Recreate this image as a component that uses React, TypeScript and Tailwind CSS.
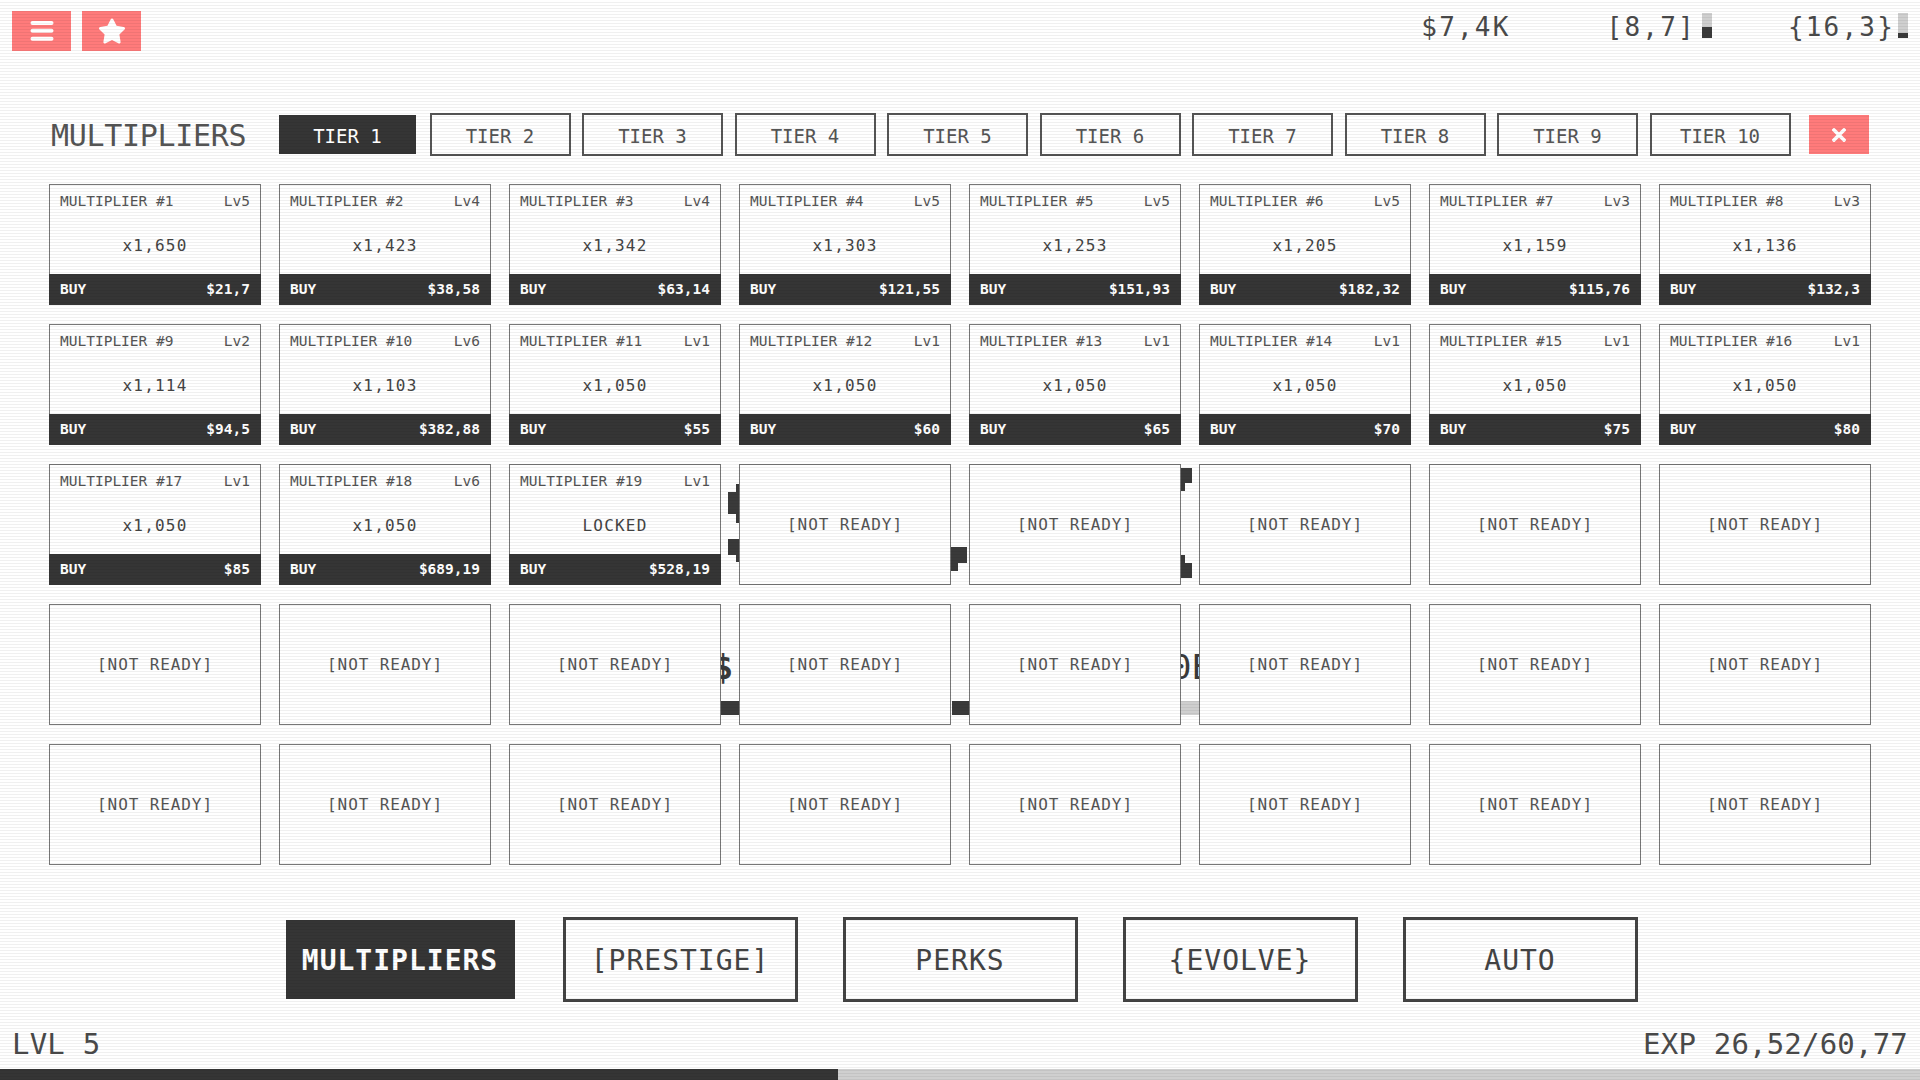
import { FaStar } from 'react-icons/fa';

type Mult = { name: string; lv: string; value: string; price: string };

const multipliers: Mult[] = [
  { name: 'MULTIPLIER #1', lv: 'Lv5', value: 'x1,650', price: '$21,7' },
  { name: 'MULTIPLIER #2', lv: 'Lv4', value: 'x1,423', price: '$38,58' },
  { name: 'MULTIPLIER #3', lv: 'Lv4', value: 'x1,342', price: '$63,14' },
  { name: 'MULTIPLIER #4', lv: 'Lv5', value: 'x1,303', price: '$121,55' },
  { name: 'MULTIPLIER #5', lv: 'Lv5', value: 'x1,253', price: '$151,93' },
  { name: 'MULTIPLIER #6', lv: 'Lv5', value: 'x1,205', price: '$182,32' },
  { name: 'MULTIPLIER #7', lv: 'Lv3', value: 'x1,159', price: '$115,76' },
  { name: 'MULTIPLIER #8', lv: 'Lv3', value: 'x1,136', price: '$132,3' },
  { name: 'MULTIPLIER #9', lv: 'Lv2', value: 'x1,114', price: '$94,5' },
  { name: 'MULTIPLIER #10', lv: 'Lv6', value: 'x1,103', price: '$382,88' },
  { name: 'MULTIPLIER #11', lv: 'Lv1', value: 'x1,050', price: '$55' },
  { name: 'MULTIPLIER #12', lv: 'Lv1', value: 'x1,050', price: '$60' },
  { name: 'MULTIPLIER #13', lv: 'Lv1', value: 'x1,050', price: '$65' },
  { name: 'MULTIPLIER #14', lv: 'Lv1', value: 'x1,050', price: '$70' },
  { name: 'MULTIPLIER #15', lv: 'Lv1', value: 'x1,050', price: '$75' },
  { name: 'MULTIPLIER #16', lv: 'Lv1', value: 'x1,050', price: '$80' },
  { name: 'MULTIPLIER #17', lv: 'Lv1', value: 'x1,050', price: '$85' },
  { name: 'MULTIPLIER #18', lv: 'Lv6', value: 'x1,050', price: '$689,19' },
  { name: 'MULTIPLIER #19', lv: 'Lv1', value: 'LOCKED', price: '$528,19' },
];

const tiers = ['TIER 1', 'TIER 2', 'TIER 3', 'TIER 4', 'TIER 5', 'TIER 6', 'TIER 7', 'TIER 8', 'TIER 9', 'TIER 10'];
const navs = ['MULTIPLIERS', '[PRESTIGE]', 'PERKS', '{EVOLVE}', 'AUTO'];

function MultCard({ m }: { m: Mult }) {
  return (
    <div className="relative z-10 flex h-[121px] flex-col border border-[#777] bg-white">
      <div className="flex justify-between pl-[10px] pr-[10px] pt-[9px] text-[14.5px] leading-none text-[#555]">
        <span>{m.name}</span>
        <span>{m.lv}</span>
      </div>
      <div className="mt-[29px] text-center text-[16px] leading-none tracking-[1.2px] text-[#444]">{m.value}</div>
      <div className="-mx-px -mb-px mt-auto flex h-[31px] items-center justify-between bg-[#353535] px-[11px] text-[14.5px] font-bold leading-none text-white">
        <span>BUY</span>
        <span>{m.price}</span>
      </div>
    </div>
  );
}

function EmptyCard() {
  return (
    <div className="relative z-10 flex h-[121px] items-center justify-center border border-[#777] bg-white text-[16px] leading-none tracking-[0.9px] text-[#555]">
      [NOT READY]
    </div>
  );
}

function Gauge({ fill }: { fill: number }) {
  return (
    <div className="flex h-[25px] w-[10px] flex-col justify-end bg-[#cfcfcf]">
      <div className="w-full bg-[#3a3a3a]" style={{ height: `${fill}%` }} />
    </div>
  );
}

export default function App() {
  const empties = Array.from({ length: 40 - multipliers.length });

  return (
    <div className="relative flex h-[1080px] w-[1920px] flex-col overflow-hidden bg-white font-['DejaVu_Sans_Mono',monospace] text-[#4a4a4a]">
      {/* top bar */}
      <div className="flex items-start justify-between px-[12px] pt-[11px]">
        <div className="flex gap-[11px]">
          <button className="flex h-[40px] w-[59px] items-center justify-center bg-[#ff7b7b]">
            <svg width="24" height="20" viewBox="0 0 24 20">
              <rect x="0.5" y="0" width="23" height="4" rx="2" fill="white" />
              <rect x="0.5" y="7.8" width="23" height="4" rx="2" fill="white" />
              <rect x="0.5" y="15.8" width="23" height="4" rx="2" fill="white" />
            </svg>
          </button>
          <button className="flex h-[40px] w-[59px] items-center justify-center bg-[#ff7b7b] text-white">
            <FaStar size={28} />
          </button>
        </div>
        <div className="mt-[2px] flex items-start text-[26px] leading-none tracking-[2.2px] text-[#4a4a4a]">
          <span className="mt-[1px]">$7,4K</span>
          <span className="ml-[96px] mt-[1px]">[8,7]</span>
          <div className="ml-[6px]">
            <Gauge fill={44} />
          </div>
          <span className="ml-[76px] mt-[1px]">{'{16,3}'}</span>
          <div className="ml-[3px]">
            <Gauge fill={20} />
          </div>
        </div>
      </div>

      {/* tier row */}
      <div className="mt-[62px] flex h-[43px] items-center px-[49px]">
        <div className="mt-[3px] w-[228px] pl-[2px] text-[30px] leading-none tracking-[-0.3px] text-[#555]">MULTIPLIERS</div>
        <div className="flex gap-[11.5px]">
          {tiers.map((t, i) =>
            i === 0 ? (
              <div
                key={t}
                className="flex h-[43px] w-[141px] items-center justify-center border-2 border-transparent bg-[#353535] bg-clip-padding pt-[3px] text-[19px] leading-none text-white"
              >
                {t}
              </div>
            ) : (
              <div
                key={t}
                className="flex h-[43px] w-[141px] items-center justify-center border-2 border-[#555] pt-[3px] text-[19px] leading-none text-[#555]"
              >
                {t}
              </div>
            )
          )}
        </div>
        <button className="ml-auto flex h-[43px] w-[64px] items-center justify-center border-2 border-transparent bg-[#ff7b7b] bg-clip-padding">
          <svg width="14" height="14" viewBox="0 0 14 14">
            <path d="M2 2 L12 12 M12 2 L2 12" stroke="white" strokeWidth="3.6" strokeLinecap="square" />
          </svg>
        </button>
      </div>

      {/* cards */}
      <div className="relative mx-[49px] mt-[28px] grid grid-cols-8 gap-x-[18px] gap-y-[19px]">
        {/* stray glyph fragments falling behind the cards */}
        <div className="absolute left-[678.7px] top-[307.7px] h-[22.6px] w-[11.3px] bg-[#3a3a3a]" />
        <div className="absolute left-[686.7px] top-[300px] h-[38.7px] w-[3.3px] bg-[#3a3a3a]" />
        <div className="absolute left-[678.7px] top-[355px] h-[16px] w-[11.3px] bg-[#3a3a3a]" />
        <div className="absolute left-[686.7px] top-[355px] h-[23px] w-[3.3px] bg-[#3a3a3a]" />
        <div className="absolute left-[901.7px] top-[363px] h-[15.7px] w-[16.6px] bg-[#3a3a3a]" />
        <div className="absolute left-[901.7px] top-[363px] h-[23.7px] w-[7.3px] bg-[#3a3a3a]" />
        <div className="absolute left-[1131.7px] top-[283.7px] h-[15.6px] w-[11px] bg-[#3a3a3a]" />
        <div className="absolute left-[1131.7px] top-[283.7px] h-[23px] w-[4.3px] bg-[#3a3a3a]" />
        <div className="absolute left-[1131.7px] top-[379.3px] h-[15px] w-[11px] bg-[#3a3a3a]" />
        <div className="absolute left-[1131.7px] top-[371px] h-[23.3px] w-[4.3px] bg-[#3a3a3a]" />
        <div className="absolute left-[663.7px] top-[466px] text-[34px] font-bold leading-none text-[#3a3a3a]">$</div>
        <div className="absolute left-[671.7px] top-[516.7px] h-[14.3px] w-[18.3px] bg-[#3a3a3a]" />
        <div className="absolute left-[902.7px] top-[516.7px] h-[14.3px] w-[17.6px] bg-[#3a3a3a]" />
        <div className="absolute left-[1122px] top-[466px] text-[34px] leading-none text-[#3a3a3a]">0E</div>
        <div className="absolute left-[1131.7px] top-[516.7px] h-[14.3px] w-[19.3px] bg-[#cfcfcf]" />

        {multipliers.map((m) => (
          <MultCard key={m.name} m={m} />
        ))}
        {empties.map((_, i) => (
          <EmptyCard key={i} />
        ))}
      </div>

      {/* bottom nav */}
      <div className="mt-[52px] flex justify-center gap-[45px]">
        {navs.map((n, i) =>
          i === 0 ? (
            <div
              key={n}
              className="flex h-[85px] w-[235px] items-center justify-center border-[3px] border-transparent bg-[#353535] bg-clip-padding pt-[2px] text-[28px] font-bold leading-none tracking-[1px] text-white"
            >
              {n}
            </div>
          ) : (
            <div
              key={n}
              className="flex h-[85px] w-[235px] items-center justify-center border-[3px] border-[#444] pt-[2px] text-[28px] leading-none tracking-[1px] text-[#444]"
            >
              {n}
            </div>
          )
        )}
      </div>

      {/* footer */}
      <div className="mt-auto mb-[10px] flex items-end justify-between px-[12px] text-[29px] leading-none tracking-[0.2px] text-[#4a4a4a]">
        <span>LVL 5</span>
        <span>EXP 26,52/60,77</span>
      </div>
      <div className="h-[11px] w-full bg-[#cfcfcf]">
        <div className="h-full bg-[#353535]" style={{ width: `${(26.52 / 60.77) * 100}%` }} />
      </div>

      {/* scanlines */}
      <div className="pointer-events-none absolute inset-0 z-50 bg-[repeating-linear-gradient(to_bottom,transparent_0px,transparent_2px,rgba(0,0,0,0.06)_2px,rgba(0,0,0,0.06)_3px)]" />
    </div>
  );
}
